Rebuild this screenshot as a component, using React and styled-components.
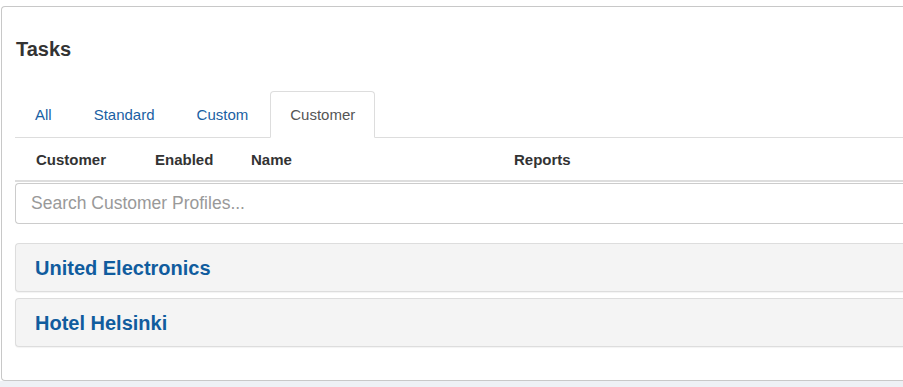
import React from "react";
import styled, { createGlobalStyle } from "styled-components";

const Global = createGlobalStyle`
  html, body { margin: 0; padding: 0; background: #eef1f5; }
  body { font-family: "Liberation Sans", Arial, sans-serif; color: #333; }
`;

const Page = styled.div`
  background: #fff;
  padding: 6px 0 0 1px;
  height: 381px;
  box-sizing: border-box;
  overflow: hidden;
`;

const Panel = styled.div`
  border: 1px solid #c8c8c8;
  border-right: none;
  border-radius: 4px 0 0 4px;
  height: 375px;
  box-sizing: border-box;
  padding: 0 0 0 13px;
  background: #fff;
`;

const Title = styled.h2`
  margin: 0;
  padding: 31px 0 0 1px;
  height: 84px;
  box-sizing: border-box;
  font-size: 20px;
  font-weight: bold;
  line-height: 23px;
  color: #333;
`;

const Tabs = styled.ul`
  list-style: none;
  margin: 0;
  padding: 0;
  display: flex;
  border-bottom: 1px solid #ddd;
`;

const Tab = styled.li`
  margin: 0 2px -1px 0;
  padding: 12px 19px;
  font-size: 15px;
  line-height: 21px;
  border: 1px solid ${(p) => (p.$active ? "#ddd" : "transparent")};
  border-bottom-color: ${(p) => (p.$active ? "#fff" : "transparent")};
  border-radius: 4px 4px 0 0;
  background: ${(p) => (p.$active ? "#fff" : "transparent")};
  color: ${(p) => (p.$active ? "#555" : "#1a5fa3")};
`;

const HeaderRow = styled.div`
  display: grid;
  grid-template-columns: 119px 96px 263px 1fr;
  border-bottom: 2px solid #ddd;
  height: 44px;
  box-sizing: border-box;
  align-items: center;
`;

const HeaderCell = styled.div`
  padding-left: 21px;
  font-size: 15px;
  font-weight: bold;
  color: #333;
`;

const Search = styled.input`
  display: block;
  margin-top: 1px;
  width: 100%;
  height: 41px;
  box-sizing: border-box;
  border: 1px solid #ccc;
  border-right: none;
  border-radius: 4px 0 0 4px;
  padding: 0 15px;
  font-family: "Liberation Sans", Arial, sans-serif;
  font-size: 17.5px;
  color: #555;
  outline: none;
  &::placeholder { color: #999; }
`;

const List = styled.div`
  display: flex;
  flex-direction: column;
  gap: 6px;
  margin-top: 19px;
`;

const Item = styled.div`
  height: 49px;
  box-sizing: border-box;
  background: #f4f4f4;
  border: 1px solid #ddd;
  border-right: none;
  border-radius: 4px 0 0 4px;
  box-shadow: 0 1px 1px rgba(0, 0, 0, 0.05);
  display: flex;
  align-items: center;
  padding: 2px 0 0 19px;
`;

const ItemTitle = styled.a`
  font-size: 20px;
  font-weight: bold;
  color: #105c9e;
  text-decoration: none;
`;

export default function App() {
  const tabs = ["All", "Standard", "Custom", "Customer"];
  return (
    <>
      <Global />
      <Page>
        <Panel>
          <Title>Tasks</Title>
          <Tabs>
            {tabs.map((t) => (
              <Tab key={t} $active={t === "Customer"}>{t}</Tab>
            ))}
          </Tabs>
          <HeaderRow>
            <HeaderCell>Customer</HeaderCell>
            <HeaderCell>Enabled</HeaderCell>
            <HeaderCell>Name</HeaderCell>
            <HeaderCell>Reports</HeaderCell>
          </HeaderRow>
          <Search placeholder="Search Customer Profiles..." />
          <List>
            <Item><ItemTitle>United Electronics</ItemTitle></Item>
            <Item><ItemTitle>Hotel Helsinki</ItemTitle></Item>
          </List>
        </Panel>
      </Page>
    </>
  );
}
